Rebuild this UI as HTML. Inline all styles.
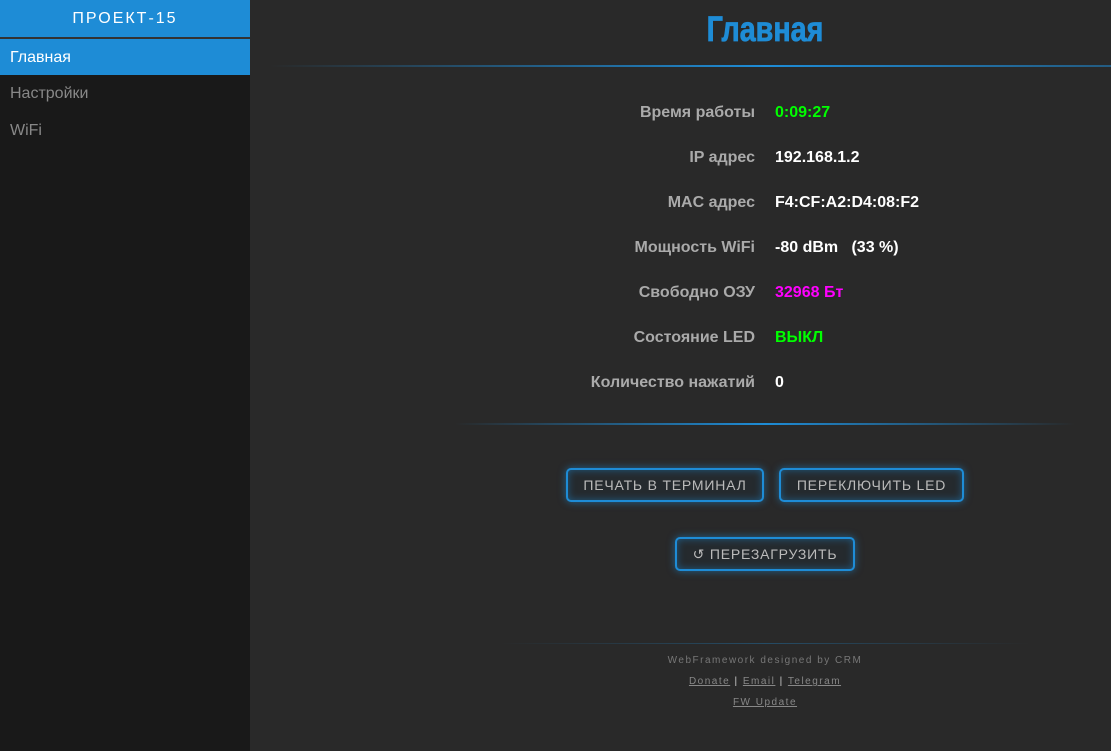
<!DOCTYPE html>
<html><head><meta charset="utf-8"><style>
*{margin:0;padding:0;box-sizing:border-box}
html,body{width:1111px;height:751px;overflow:hidden;background:#292929;font-family:Arial,"Liberation Sans",sans-serif}
#side{position:absolute;left:0;top:0;width:250px;height:751px;background:#191919}
#hd{background:#1e8cd6;color:#fff;text-align:center;font-size:16px;letter-spacing:2px;line-height:37px;border-bottom:2px solid #333;height:39px}
.it{height:37px;line-height:37px;padding-left:10px;font-size:16px;color:#888}
.it.a{background:#1e8cd6;color:#fff;height:36px}
#main{position:absolute;left:250px;top:0;width:1030px;height:751px}
h1{position:absolute;left:0;width:1030px;top:10px;text-align:center;color:#1e8cd6;font-size:35px;font-weight:900;letter-spacing:0;transform:scaleX(0.82);-webkit-text-stroke:0.8px #1e8cd6}
.ln{position:absolute;height:2px}
.row{position:absolute;left:0;width:1030px;font-size:16px;font-weight:bold}
.row .l{position:absolute;right:525px;color:#aaa;white-space:nowrap}
.row .v{position:absolute;left:525px;color:#fff;white-space:nowrap}
.btn{position:absolute;height:34px;border:2px solid #1e8cd6;border-radius:5px;background:#252a2e;box-shadow:0 0 8px rgba(30,140,214,.6),inset 0 0 8px rgba(30,140,214,.5);color:#bbb;font-size:14px;letter-spacing:.8px;text-align:center;line-height:30px}
.ft{position:absolute;left:0;width:1030px;text-align:center;font-size:10px;letter-spacing:1.5px;color:#777}
.ft u{color:#888}
</style></head><body>
<div id="side"><div id="hd">ПРОЕКТ-15</div><div class="it a">Главная</div><div class="it">Настройки</div><div class="it">WiFi</div></div>
<div id="main">
<h1>Главная</h1>
<div class="ln" style="top:65px;left:20px;width:990px;background:linear-gradient(90deg,rgba(30,140,214,0),#1e8cd6 50%,rgba(30,140,214,.3))"></div>
<div class="row" style="top:104px"><span class="l">Время работы</span><span class="v" style="color:#0f0">0:09:27</span></div>
<div class="row" style="top:149px"><span class="l">IP адрес</span><span class="v">192.168.1.2</span></div>
<div class="row" style="top:194px"><span class="l">MAC адрес</span><span class="v">F4:CF:A2:D4:08:F2</span></div>
<div class="row" style="top:239px"><span class="l">Мощность WiFi</span><span class="v">-80 dBm &nbsp; (33 %)</span></div>
<div class="row" style="top:284px"><span class="l">Свободно ОЗУ</span><span class="v" style="color:#f0f">32968 Бт</span></div>
<div class="row" style="top:329px"><span class="l">Состояние LED</span><span class="v" style="color:#0f0">ВЫКЛ</span></div>
<div class="row" style="top:374px"><span class="l">Количество нажатий</span><span class="v">0</span></div>
<div class="ln" style="top:423px;left:205px;width:620px;background:linear-gradient(90deg,rgba(30,140,214,0),#1e8cd6 50%,rgba(30,140,214,0))"></div>
<div class="btn" style="left:316px;top:468px;width:198px">ПЕЧАТЬ В ТЕРМИНАЛ</div>
<div class="btn" style="left:529px;top:468px;width:185px">ПЕРЕКЛЮЧИТЬ LED</div>
<div class="btn" style="left:425px;top:537px;width:180px">↺ ПЕРЕЗАГРУЗИТЬ</div>
<div class="ln" style="top:643px;left:250px;width:530px;height:1px;background:linear-gradient(90deg,rgba(30,140,214,0),rgba(30,140,214,.35) 50%,rgba(30,140,214,0))"></div>
<div class="ft" style="top:655px">WebFramework designed by CRM</div>
<div class="ft" style="top:676px"><u>Donate</u> <span style="color:#ccc">|</span> <u>Email</u> <span style="color:#ccc">|</span> <u>Telegram</u></div>
<div class="ft" style="top:697px"><u>FW Update</u></div>
</div>
</body></html>
